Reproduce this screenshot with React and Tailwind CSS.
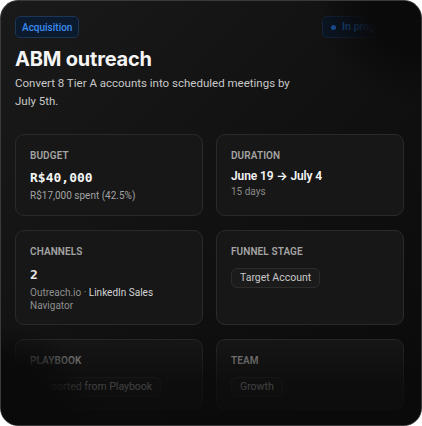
import React from "react";

const sans = "font-['Roboto','Inter',sans-serif]";
const display = "font-['Inter','Roboto',sans-serif]";
const mono = "font-['DejaVu_Sans_Mono','Liberation_Mono',monospace]";

function Card({ label, children }) {
  return (
    <div className="rounded-[9px] border border-[#2a2a2a] bg-[#171717] px-[14px] pt-[14px] pb-[12px]">
      <div className="text-[10px] leading-[14px] font-semibold tracking-[0.01em] text-[#a3a3a3] uppercase">
        {label}
      </div>
      {children}
    </div>
  );
}

function Chip({ children }) {
  return (
    <span className="inline-flex h-[20px] items-center rounded-[6px] border border-[#2c2c2c] bg-[#1b1b1b] px-[8px] text-[10.5px] text-[#c8c8c8]">
      {children}
    </span>
  );
}

export default function App() {
  return (
    <div className={`h-[426px] w-[422px] bg-white ${sans}`}>
      <div className="relative h-full w-full overflow-hidden rounded-[18px] border border-[#3a3a3a] bg-[linear-gradient(135deg,#1a1a1a_0%,#121212_45%,#0a0a0a_100%)] pl-[14px] pr-[17px] pt-[15px]">
        <div className="flex items-center justify-between">
          <span className="inline-flex h-[22px] items-center rounded-[5px] border border-[#1d3557] bg-[#0c1a2e] px-[6px] text-[10px] font-medium text-[#3b8cf0]">
            Acquisition
          </span>
          <span className="inline-flex h-[22px] items-center gap-[6px] rounded-[5px] border border-[#14253d] bg-[#0a1524] px-[8px] text-[10.5px] font-semibold text-[#1f5aa8]">
            <span className="h-[5px] w-[5px] rounded-full bg-[#1d5fb3]" />
            In progress
          </span>
        </div>

        <h1 className={`mt-[8px] text-[20px] leading-[26px] font-bold tracking-[-0.01em] text-[#f5f5f5] ${display}`}>
          ABM outreach
        </h1>
        <p className="mt-[2px] w-[285px] text-[11.5px] leading-[18px] text-[#c8c8c8]">
          Convert 8 Tier A accounts into scheduled meetings by July 5th.
        </p>

        <div className="mt-[24px] grid grid-cols-2 gap-x-[13px] gap-y-[14px]">
          <Card label="Budget">
            <div className={`mt-[6px] text-[13px] leading-[18px] font-bold text-[#f5f5f5] ${mono}`}>
              R$40,000
            </div>
            <div className="mt-[2px] text-[10px] leading-[14px] text-[#a3a3a3]">
              R$17,000 spent (42.5%)
            </div>
          </Card>
          <Card label="Duration">
            <div className="mt-[4px] text-[12px] leading-[18px] font-semibold tracking-[-0.01em] text-[#f5f5f5]">
              June 19 → July 4
            </div>
            <div className="text-[10px] leading-[14px] text-[#8a8a8a]">15 days</div>
          </Card>

          <Card label="Channels">
            <div className={`mt-[7px] text-[13px] leading-[18px] font-bold text-[#e5e5e5] ${mono}`}>
              2
            </div>
            <div className="mt-[2px] text-[10px] leading-[13px] text-[#8f8f8f]">
              Outreach.io · <span className="text-[#d4d4d4]">LinkedIn Sales</span>
              <br />
              Navigator
            </div>
          </Card>
          <Card label="Funnel stage">
            <div className="mt-[5px]">
              <Chip>Target Account</Chip>
            </div>
          </Card>

          <Card label="Playbook">
            <div className="mt-[5px]">
              <Chip>Imported from Playbook</Chip>
            </div>
          </Card>
          <Card label="Team">
            <div className="mt-[5px]">
              <Chip>Growth</Chip>
            </div>
          </Card>
        </div>

        <div className="pointer-events-none absolute inset-0 bg-[radial-gradient(circle_at_100%_0%,#0a0a0a_0px,#0a0a0a_52px,rgba(10,10,10,0)_105px)]" />
        <div className="pointer-events-none absolute inset-0 bg-[linear-gradient(to_bottom,rgba(10,10,10,0)_0%,rgba(10,10,10,0)_78%,rgba(10,10,10,0.7)_90%,rgba(10,10,10,0.9)_100%)]" />
        <div className="pointer-events-none absolute inset-0 bg-[radial-gradient(circle_at_0%_100%,#0a0a0a_0px,#0a0a0a_58px,rgba(10,10,10,0)_100px)]" />
      </div>
    </div>
  );
}
